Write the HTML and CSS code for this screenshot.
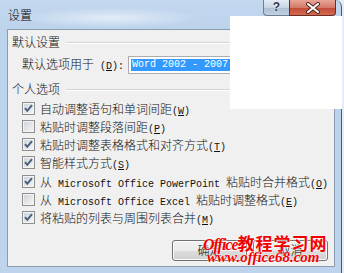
FILE: index.html
```
<!DOCTYPE html>
<html lang="zh-CN">
<head>
<meta charset="utf-8">
<title>设置</title>
<link rel="stylesheet" href="styles.css">
</head>
<body>
<div class="window">
  <div class="titlebar">
    <span class="title">设置</span>
    <div class="caption">
      <div class="cap-help">?</div>
      <div class="cap-close">
        <svg width="16" height="12" viewBox="0 0 16 12"><path d="M3 2 L13 10 M13 2 L3 10" stroke="#4a1f19" stroke-width="4" stroke-linecap="round"/><path d="M3 2 L13 10 M13 2 L3 10" stroke="#ffffff" stroke-width="2.2" stroke-linecap="round"/></svg>
      </div>
    </div>
  </div>
  <div class="client">
    <div class="group-head">默认设置</div>
    <div class="default-row">
      <span class="label">默认选项用于<span class="en"> (<u>D</u>):</span></span>
      <div class="combo"><span class="sel en">Word 2002 - 2007</span></div>
    </div>
    <div class="group-head second">个人选项</div>
    <ul class="checks">
      <li><span class="cb on"></span><span class="txt">自动调整语句和单词间距<span class="en">(<u>W</u>)</span></span></li>
      <li><span class="cb"></span><span class="txt">粘贴时调整段落间距<span class="en">(<u>P</u>)</span></span></li>
      <li><span class="cb on"></span><span class="txt">粘贴时调整表格格式和对齐方式<span class="en">(<u>T</u>)</span></span></li>
      <li><span class="cb on"></span><span class="txt">智能样式方式<span class="en">(<u>S</u>)</span></span></li>
      <li><span class="cb on"></span><span class="txt">从<span class="en"> Microsoft Office PowerPoint </span>粘贴时合并格式<span class="en">(<u>O</u>)</span></span></li>
      <li><span class="cb"></span><span class="txt">从<span class="en"> Microsoft Office Excel </span>粘贴时调整格式<span class="en">(<u>E</u>)</span></span></li>
      <li><span class="cb on"></span><span class="txt">将粘贴的列表与周围列表合并<span class="en">(<u>M</u>)</span></span></li>
    </ul>
    <div class="buttons">
      <button class="btn">确定</button>
      <button class="btn">取消</button>
    </div>
  </div>
</div>
<div class="mask"></div>
<div class="watermark">
  <div class="wm1"><span class="wm-en">Office</span><span class="wm-cn">教程学习网</span></div>
  <div class="wm2">www.office68.com</div>
</div>
</body>
</html>
```
FILE: styles.css
```
html, body {
  margin: 0;
  padding: 0;
}
body {
  width: 344px;
  height: 273px;
  overflow: hidden;
  position: relative;
  background: #e4ecf5;
  font-family: "Noto Sans CJK SC", sans-serif;
  font-weight: 300;
  font-size: 12px;
  color: #111;
}
.en {
  font-family: "Liberation Mono", monospace;
  font-weight: normal;
  font-size: 10px;
}
.window {
  width: 342px;
  height: 273px;
  box-sizing: border-box;
  padding: 0 6px 6px 7px;
  border-right: 1px solid #4b5a6e;
  border-top-right-radius: 7px;
  background:
    radial-gradient(ellipse 90px 10px at 110px 18px, rgba(255,255,255,0.55), rgba(255,255,255,0)),
    linear-gradient(#c4d8ef, #bcd3ec 30px, #bdd4ec);
  display: flex;
  flex-direction: column;
}
.titlebar {
  height: 29px;
  flex: none;
  margin-right: -6px;
  display: flex;
  justify-content: space-between;
  align-items: flex-start;
}
.title {
  margin: 6px 0 0 1px;
  line-height: 17px;
  font-size: 12px;
  color: #000;
}
.caption {
  display: flex;
  margin-right: 5px;
}
.cap-help {
  width: 26px;
  height: 16px;
  box-sizing: border-box;
  border: 1px solid #6d7f96;
  border-top: none;
  border-right: none;
  border-bottom-left-radius: 4px;
  background: linear-gradient(#e3ebf4, #c9d6e5 50%, #aebdd0 51%, #c2d1e2);
  font-family: "Liberation Sans", sans-serif;
  font-weight: bold;
  font-size: 12px;
  line-height: 15px;
  text-align: center;
  color: #2c3a4e;
  text-shadow: 0 0 2px #fff;
}
.cap-close {
  width: 47px;
  height: 16px;
  box-sizing: border-box;
  border: 1px solid #6b2c24;
  border-top: none;
  border-bottom-right-radius: 4px;
  background: linear-gradient(#e8a598, #d47a68 50%, #c24a36 51%, #d26a50);
  display: flex;
  align-items: center;
  justify-content: center;
}
.client {
  flex: 1;
  background: #f0f0f0;
  border: 1px solid #8b9bb0;
  padding: 5px 0 0 4px;
  display: flex;
  flex-direction: column;
}
.group-head {
  height: 14px;
  line-height: 14px;
  display: flex;
  align-items: center;
  gap: 6px;
}
.group-head::after {
  content: "";
  flex: 1;
  height: 0;
  border-top: 1px solid #d5d5d5;
  border-bottom: 1px solid #ffffff;
  margin-top: 1px;
}
.group-head.second {
  margin-top: 8px;
}
.default-row {
  margin-top: 6px;
  padding-left: 10px;
  height: 19px;
  display: flex;
  align-items: flex-start;
  gap: 4px;
}
.label {
  line-height: 14px;
  margin-top: 2px;
  white-space: pre;
}
.combo {
  flex: 1;
  height: 18px;
  box-sizing: border-box;
  margin-top: 1px;
  border: 1px solid #abadb3;
  background: #fff;
  padding: 2px;
  display: flex;
}
.sel {
  flex: 1;
  background: #3399ff;
  color: #fff;
  line-height: 12px;
  padding-left: 1px;
}
.checks {
  list-style: none;
  margin: 3px 0 0 0;
  padding: 0 0 0 10px;
}
.checks li {
  height: 18.25px;
  display: flex;
  align-items: center;
}
.txt {
  white-space: pre;
}
.cb {
  width: 13px;
  height: 13px;
  box-sizing: border-box;
  margin-right: 5px;
  flex: none;
  border: 1px solid #8e8f8f;
  background: linear-gradient(135deg, #cdd1d7, #f7f7f7);
  box-shadow: inset 0 0 0 1px #f4f4f4;
}
.cb.on {
  background:
    url("data:image/svg+xml;utf8,<svg xmlns='http://www.w3.org/2000/svg' width='11' height='11' viewBox='0 0 11 11'><path d='M2 5.2 L4.3 7.8 L9 2.2' fill='none' stroke='%234a5e80' stroke-width='2'/></svg>") center/11px 11px no-repeat,
    linear-gradient(135deg, #cdd1d7, #f7f7f7);
}
.buttons {
  margin-top: 13px;
  display: flex;
  justify-content: flex-end;
  gap: 6px;
  padding-right: 6px;
}
.btn {
  width: 75px;
  height: 21px;
  margin: 0;
  border: 1px solid #707070;
  border-radius: 3px;
  background: linear-gradient(#f2f2f2, #ebebeb 50%, #dddddd 51%, #cfcfcf);
  box-shadow: inset 0 0 0 1px #fcfcfc;
  font-family: "Noto Sans CJK SC", sans-serif;
  font-weight: 300;
  font-size: 12px;
  color: #000;
  padding: 0;
  line-height: 18px;
}
.mask {
  position: absolute;
  left: 230px;
  top: 16px;
  width: 112px;
  height: 93px;
  background: #fff;
}
.watermark {
  position: absolute;
  left: 203px;
  top: 233px;
  color: #f20000;
  text-shadow: 0 0 2px #fff, 0 0 1px #fff;
  white-space: nowrap;
}
.wm1 {
  height: 20px;
  display: flex;
  align-items: baseline;
}
.wm-en {
  font-family: "Liberation Serif", serif;
  font-style: italic;
  font-weight: bold;
  font-size: 16px;
  letter-spacing: -1px;
}
.wm-cn {
  font-family: "Noto Sans CJK SC", sans-serif;
  font-weight: bold;
  font-size: 17px;
  letter-spacing: 1px;
  line-height: 20px;
}
.wm2 {
  margin-top: -3px;
  margin-left: 4px;
  font-family: "Liberation Serif", serif;
  font-style: italic;
  font-weight: bold;
  font-size: 15px;
  line-height: 14px;
}
```
